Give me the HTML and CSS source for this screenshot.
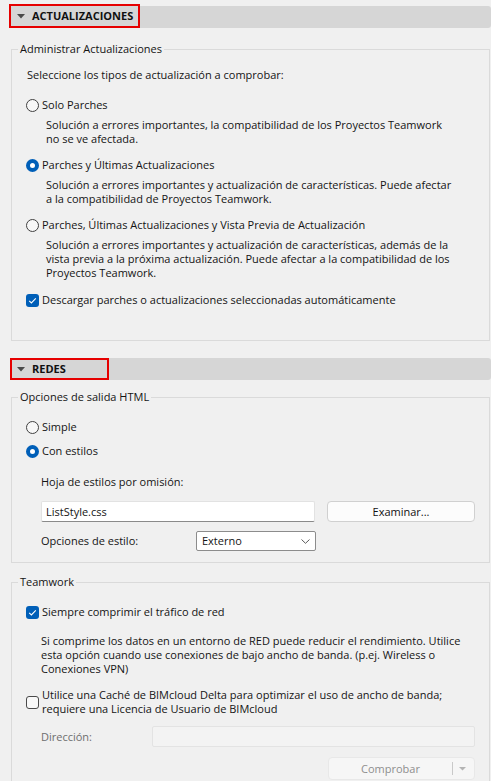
FILE: index.html
```html
<!DOCTYPE html>
<html lang="es">
<head>
<meta charset="utf-8">
<title>Preferencias</title>
<link rel="stylesheet" href="styles.css">
</head>
<body>
<div class="panel">
  <div class="bar bar-first">
    <div class="hl hl-a">
      <svg class="tri" width="8" height="5" viewBox="0 0 8 5"><path d="M0 0H8L4 4.5Z" fill="#4a4a4a"/></svg>
      <span class="bar-title">ACTUALIZACIONES</span>
    </div>
  </div>

  <fieldset class="group g1">
    <legend>Administrar Actualizaciones</legend>
    <div class="inner">
      <p class="intro">Seleccione los tipos de actualización a comprobar:</p>

      <div class="opt opt-first"><span class="radio"></span><span>Solo Parches</span></div>
      <p class="desc">Solución a errores importantes, la compatibilidad de los Proyectos Teamwork<br>no se ve afectada.</p>

      <div class="opt"><span class="radio on"></span><span>Parches y Últimas Actualizaciones</span></div>
      <p class="desc">Solución a errores importantes y actualización de características. Puede afectar<br>a la compatibilidad de Proyectos Teamwork.</p>

      <div class="opt"><span class="radio"></span><span>Parches, Últimas Actualizaciones y Vista Previa de Actualización</span></div>
      <p class="desc">Solución a errores importantes y actualización de características, además de la<br>vista previa a la próxima actualización. Puede afectar a la compatibilidad de los<br>Proyectos Teamwork.</p>

      <div class="opt opt-check"><span class="check on"><svg width="13" height="13" viewBox="0 0 13 13"><path d="M3.2 6.8L5.4 9L9.8 4.4" fill="none" stroke="#fff" stroke-width="1.1"/></svg></span><span>Descargar parches o actualizaciones seleccionadas automáticamente</span></div>
    </div>
  </fieldset>

  <div class="bar bar-second">
    <div class="hl hl-b">
      <svg class="tri" width="8" height="5" viewBox="0 0 8 5"><path d="M0 0H8L4 4.5Z" fill="#4a4a4a"/></svg>
      <span class="bar-title">REDES</span>
    </div>
  </div>

  <fieldset class="group g2">
    <legend>Opciones de salida HTML</legend>
    <div class="inner">
      <div class="opt opt-first"><span class="radio"></span><span>Simple</span></div>
      <div class="opt opt-tight"><span class="radio on"></span><span>Con estilos</span></div>
      <p class="sub-label">Hoja de estilos por omisión:</p>
      <div class="field-row">
        <div class="textbox">ListStyle.css</div>
        <div class="button">Examinar...</div>
      </div>
      <div class="select-row">
        <span class="select-label">Opciones de estilo:</span>
        <div class="select"><span>Externo</span><svg width="9" height="5" viewBox="0 0 9 5"><path d="M0.5 0.5L4.5 4.3L8.5 0.5" fill="none" stroke="#5a5a5a" stroke-width="1"/></svg></div>
      </div>
    </div>
  </fieldset>

  <fieldset class="group g3">
    <legend>Teamwork</legend>
    <div class="inner">
      <div class="opt opt-first"><span class="check on"><svg width="13" height="13" viewBox="0 0 13 13"><path d="M3.2 6.8L5.4 9L9.8 4.4" fill="none" stroke="#fff" stroke-width="1.1"/></svg></span><span>Siempre comprimir el tráfico de red</span></div>
      <p class="desc desc-tw">Si comprime los datos en un entorno de RED puede reducir el rendimiento. Utilice<br>esta opción cuando use conexiones de bajo ancho de banda. (p.ej. Wireless o<br>Conexiones VPN)</p>
      <div class="opt opt-two"><span class="check"></span><span>Utilice una Caché de BIMcloud Delta para optimizar el uso de ancho de banda;<br>requiere una Licencia de Usuario de BIMcloud</span></div>
      <div class="addr-row">
        <span class="addr-label">Dirección:</span>
        <div class="textbox disabled"></div>
      </div>
      <div class="btn-row">
        <div class="split disabled"><span class="split-main">Comprobar</span><span class="split-sep"></span><svg width="7" height="4" viewBox="0 0 7 4"><path d="M0 0H7L3.5 3.6Z" fill="#b4b4b4"/></svg></div>
      </div>
    </div>
  </fieldset>
</div>
</body>
</html>
```

FILE: styles.css
```css
html, body {
  margin: 0;
  padding: 0;
  overflow: hidden;
  background: #f0f0f0;
}

body {
  font-family: "Open Sans", "Noto Sans", "DejaVu Sans", sans-serif;
  font-size: 11px;
  line-height: 14px;
  color: #141414;
}

p {
  margin: 0;
}

.panel {
  width: 491px;
}

/* section header bars */
.bar {
  display: flex;
  align-items: flex-end;
  height: 22px;
  margin-left: 10px;
  background: #d6d6d6;
  border-radius: 0 3px 3px 0;
}

.bar-first {
  margin-top: 6px;
}

.bar-second {
  margin-top: 17px;
}

.hl {
  display: flex;
  align-items: center;
  box-sizing: border-box;
  height: 22px;
  border: 2px solid #e60000;
  padding-left: 5px;
}

.hl-a {
  width: 131px;
  height: 24px;
  margin-left: -1px;
  padding-left: 6px;
}

.hl-b {
  width: 99px;
}

.tri {
  display: block;
  margin-right: 7px;
  margin-top: 1px;
}

.bar-title {
  font-weight: 700;
  font-size: 11px;
  color: #111;
}

/* group boxes */
.group {
  margin: 0 1px 0 11px;
  padding: 0 0 0 6px;
  border: 1px solid #dadada;
  min-width: 0;
}

.group legend {
  padding: 0 2px;
  line-height: 14px;
}

.g1 {
  margin-top: 14px;
  padding-bottom: 33px;
}

.g2 {
  margin-top: 10px;
  padding-bottom: 11px;
}

.g3 {
  margin-top: 12px;
  padding-bottom: 20px;
}

.inner {
  padding-left: 8px;
}

.intro {
  margin-top: 12px;
  padding-left: 1px;
}

/* radio / checkbox rows */
.opt {
  display: flex;
  align-items: center;
  margin-top: 12px;
  white-space: nowrap;
}

.opt-first {
  margin-top: 16px;
}

.opt-tight {
  margin-top: 10px;
}

.opt-check {
  margin-top: 13px;
}

.opt-two {
  margin-top: 12px;
}

.radio {
  flex: none;
  box-sizing: border-box;
  width: 13px;
  height: 13px;
  margin-right: 3px;
  border: 1px solid #404040;
  border-radius: 50%;
  background: #f7f7f7;
}

.radio.on {
  border: 4px solid #005fb8;
  background: #ffffff;
}

.check {
  flex: none;
  box-sizing: border-box;
  width: 13px;
  height: 13px;
  margin-right: 3px;
  border: 1px solid #4a4a4a;
  border-radius: 3px;
  background: #f8f8f8;
}

.check svg {
  display: block;
}

.check.on {
  border: none;
  background: #005fb8;
}

.desc {
  margin-top: 6px;
  padding-left: 20px;
  white-space: nowrap;
}

.desc-tw {
  margin-top: 15px;
  padding-left: 15px;
}

/* HTML output options */
.sub-label {
  margin-top: 17px;
  padding-left: 15px;
}

.field-row {
  display: flex;
  gap: 12px;
  margin-top: 12px;
  padding-left: 15px;
}

.textbox {
  box-sizing: border-box;
  width: 274px;
  height: 21px;
  padding: 0 4px;
  line-height: 20px;
  background: #ffffff;
  border: 1px solid #e2e2e2;
  border-bottom-color: #8a8a8a;
  border-radius: 2px;
}

.button {
  box-sizing: border-box;
  width: 148px;
  height: 21px;
  line-height: 19px;
  text-align: center;
  background: #fcfcfc;
  border: 1px solid #d0d0d0;
  border-radius: 4px;
  color: #111;
}

.select-row {
  display: flex;
  align-items: center;
  margin-top: 9px;
  padding-left: 15px;
}

.select-label {
  width: 155px;
}

.select {
  box-sizing: border-box;
  display: flex;
  align-items: center;
  justify-content: space-between;
  width: 120px;
  height: 20px;
  padding: 0 5px;
  background: #ffffff;
  border: 1px solid #8c8c8c;
  border-radius: 2px;
}

/* Teamwork */
.addr-row {
  display: flex;
  align-items: center;
  margin-top: 10px;
  padding-left: 15px;
}

.addr-label {
  width: 111px;
  color: #6e6e6e;
}

.textbox.disabled {
  width: 323px;
  background: #f3f3f3;
  border: 1px solid #e3e3e3;
}

.btn-row {
  display: flex;
  justify-content: flex-end;
  margin-top: 10px;
  padding-right: 14px;
}

.split {
  box-sizing: border-box;
  display: flex;
  align-items: center;
  width: 147px;
  height: 23px;
  background: #f6f6f6;
  border: 1px solid #e8e8e8;
  border-radius: 4px;
  color: #8e8e8e;
}

.split-main {
  flex: 1;
  text-align: center;
}

.split-sep {
  width: 1px;
  height: 13px;
  margin-right: 6px;
  background: #c9c9c9;
}

.split svg {
  margin-right: 8px;
}
```
